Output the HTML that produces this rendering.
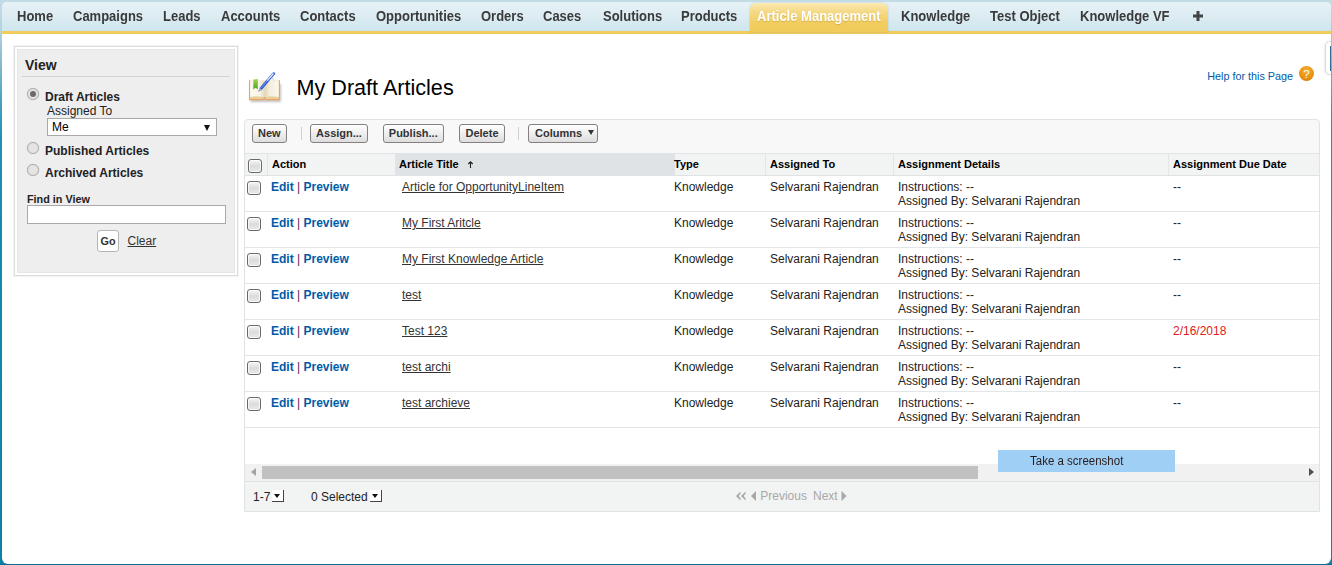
<!DOCTYPE html>
<html>
<head>
<meta charset="utf-8">
<title>Article Management</title>
<style>
*{box-sizing:border-box;margin:0;padding:0}
html,body{width:1332px;height:565px;overflow:hidden}
body{font-family:"Liberation Sans",Arial,sans-serif;font-size:12px;color:#222;position:relative;
 background:linear-gradient(to bottom,#c3dce6 0px,#b4d3df 30px,#8bbdd0 60px,#4aa2bf 100px,#2290b3 140px,#1688ad 250px,#0f7fa5 565px)}
.abs{position:absolute;white-space:nowrap}
#page{position:absolute;left:2px;top:2px;width:1329px;height:562px;background:#fff;border-radius:5px 5px 6px 6px;overflow:hidden}
#rightedge{position:absolute;left:1331px;top:0;width:1px;height:565px;background:linear-gradient(to bottom,#c3dce6 0px,#a9ccd9 30px,#2d8fb0 120px,#147fa3 565px)}
#bottomedge{position:absolute;left:0;top:564px;width:1332px;height:1px;background:#0a6f92}
/* tab bar */
#tabbar{position:absolute;left:0;top:0;width:1329px;height:29px;background:linear-gradient(to bottom,#e6f2f6 0,#dcecf2 50%,#cfe5ee 100%)}
#tabline{position:absolute;left:0;top:29px;width:1329px;height:3px;background:#f1cb5b}
.tab{position:absolute;top:6.7px;font-size:13px;font-weight:bold;color:#3a3a3a;line-height:16px;white-space:nowrap;transform:scaleY(1.07);transform-origin:0 12px}
#acttab{position:absolute;left:748px;top:1px;width:138px;height:29px;border-radius:6px 6px 0 0;background:linear-gradient(to bottom,#faeab4 0,#f5d987 30%,#f1cd60 70%,#f1cb5b 100%);box-shadow:0 0 2px rgba(120,140,150,.45)}
#acttab span{position:absolute;left:7px;top:5.7px;transform:scaleY(1.07);transform-origin:0 12px;font-size:13px;font-weight:bold;color:#fff;line-height:16px;white-space:nowrap;text-shadow:0 1px 1px rgba(190,150,40,.55)}
/* sidebar */
#sb{position:absolute;left:12px;top:44px;width:224px;height:230px;border:1px solid #dcdcdc;background:#fff;box-shadow:0 0 0 1px #f4f4f4}
#sbin{position:absolute;left:2px;top:2px;width:218px;height:224px;background:#eeeeee;border:1px solid #e6e6e6}
.radio{position:absolute;width:12px;height:12px;border-radius:50%;border:1px solid #b0b0b0;background:#e4e4e4;box-shadow:0 0 1px #b8b8b8}
.radio.on:after{content:"";position:absolute;left:2px;top:2px;width:6px;height:6px;border-radius:50%;background:#6a6a6a}
.b{font-weight:bold}
/* main */
a{color:#015ba7;text-decoration:none}
#panel{position:absolute;left:242px;top:117px;width:1076px;height:393px;border:1px solid #e0e3e5;border-radius:4px 4px 0 0;background:#f8f8f8;overflow:hidden}
.btn{position:absolute;top:4px;height:19px;border:1px solid #857f7f;border-radius:3px;background:linear-gradient(to bottom,#ffffff 0,#f0f0f0 45%,#dddddd 100%);font-size:11px;font-weight:bold;color:#333;text-align:center;line-height:17px;white-space:nowrap}
.sep{position:absolute;top:7px;width:1px;height:13px;background:#d0d0d0}
#hdr{position:absolute;left:-1px;top:33px;width:1076px;height:23px;background:#f2f3f3;border-top:1px solid #e0e3e5;border-bottom:1px solid #e0e3e5}
#hdr .h{position:absolute;top:4px;font-size:11px;font-weight:bold;color:#000;line-height:13px;white-space:nowrap}
#hdr .vs{position:absolute;top:0;width:1px;height:21px;background:#e3e5e6}
#sorted{position:absolute;left:151px;top:0;width:280px;height:21px;background:#e0e3e5}
#rows{position:absolute;left:-1px;top:56px;width:1076px;height:288px;background:#fff}
.row{position:absolute;left:0;width:1076px;height:36px;border-bottom:1px solid #e3e6e8}
.row span,.row a{position:absolute;top:4px;line-height:14px;white-space:nowrap}
.cb{position:absolute;width:14px;height:14px;border:1px solid #6a6a6a;border-radius:3px;background:linear-gradient(to bottom,#f6f6f6 0,#dcdcdc 50%,#e9e9e9 100%);box-shadow:inset 0 0 0 1px rgba(255,255,255,.75)}
.act a{font-weight:bold}
.lnk{color:#333;text-decoration:underline}
#sbar{position:absolute;left:0;top:344px;width:1075px;height:17px;background:#f1f1f1}
#thumb{position:absolute;left:17px;top:2px;width:716px;height:13px;background:#c1c1c1}
#foot{position:absolute;left:0;top:361px;width:1075px;height:30px;background:#f2f3f3;border-top:1px solid #e0e3e5}
.dd{position:absolute;width:12px;height:12px;background:#fff;border-right:1px solid #444;border-bottom:1px solid #444}
.dd:after{content:"";position:absolute;left:2px;top:4px;border:3.7px solid transparent;border-top:4.2px solid #111;border-bottom:0}
.g{color:#a8a8a8}
</style>
</head>
<body>
<div id="rightedge"></div>
<div id="bottomedge"></div>
<div id="page">
 <div id="tabbar"></div>
 <div id="tabline"></div>
 <span class="tab" style="left:15px">Home</span>
 <span class="tab" style="left:71px">Campaigns</span>
 <span class="tab" style="left:161px">Leads</span>
 <span class="tab" style="left:219px">Accounts</span>
 <span class="tab" style="left:298px">Contacts</span>
 <span class="tab" style="left:374px">Opportunities</span>
 <span class="tab" style="left:479px">Orders</span>
 <span class="tab" style="left:541px">Cases</span>
 <span class="tab" style="left:601px">Solutions</span>
 <span class="tab" style="left:679px">Products</span>
 <div id="acttab"><span>Article Management</span></div>
 <span class="tab" style="left:899px">Knowledge</span>
 <span class="tab" style="left:988px">Test Object</span>
 <span class="tab" style="left:1078px">Knowledge VF</span>
 <svg class="abs" style="left:1191px;top:9px" width="10" height="10" viewBox="0 0 10 10"><path d="M3.5 0h3v3.5H10v3H6.5V10h-3V6.500H0v-3h3.500z" fill="#444"/></svg>

 <!-- sidebar -->
 <div id="sb"><div id="sbin">
  <span class="abs b" style="left:7px;top:7px;font-size:14px;line-height:17px;color:#222">View</span>
  <div class="abs" style="left:4px;top:26px;width:208px;height:1px;background:#d4d4d4"></div>
  <div class="radio on" style="left:9px;top:38px"></div>
  <span class="abs b" style="left:27px;top:40px;line-height:14px">Draft Articles</span>
  <span class="abs" style="left:29px;top:54px;line-height:14px">Assigned To</span>
  <div class="abs" style="left:29px;top:68px;width:170px;height:18px;background:#fff;border:1px solid #a9a9a9">
    <span class="abs" style="left:4px;top:1px;line-height:14px;color:#000">Me</span>
    <span class="abs" style="left:156px;top:5.5px;width:0;height:0;border:3.5px solid transparent;border-top:6px solid #111;border-bottom:0"></span>
  </div>
  <div class="radio" style="left:9px;top:92px"></div>
  <span class="abs b" style="left:27px;top:94px;line-height:14px">Published Articles</span>
  <div class="radio" style="left:9px;top:114px"></div>
  <span class="abs b" style="left:27px;top:116px;line-height:14px">Archived Articles</span>
  <span class="abs b" style="left:9px;top:143px;font-size:10.8px;line-height:13px">Find in View</span>
  <div class="abs" style="left:9px;top:155px;width:199px;height:19px;background:#fff;border:1px solid #a9a9a9"></div>
  <div class="abs b" style="left:79px;top:180px;width:22px;height:22px;border:1px solid #b5b5b5;border-radius:3px;background:#fff;font-size:10.8px;line-height:20px;text-align:center;color:#333">Go</div>
  <span class="abs" style="left:109.5px;top:184px;line-height:14px;color:#333;text-decoration:underline">Clear</span>
 </div></div>

 <!-- title -->
 <svg class="abs" style="left:244px;top:66px" width="40" height="38" viewBox="0 0 40 38">
  <defs>
   <linearGradient id="pgL" x1="0" x2="1"><stop offset="0" stop-color="#fcfaf2"/><stop offset=".65" stop-color="#f8f4e6"/><stop offset="1" stop-color="#e4d9bc"/></linearGradient>
   <linearGradient id="pgR" x1="0" x2="1"><stop offset="0" stop-color="#dfd2b2"/><stop offset=".35" stop-color="#f3eddb"/><stop offset="1" stop-color="#fbf8ee"/></linearGradient>
   <linearGradient id="grn" x1="0" x2="0" y1="0" y2="1"><stop offset="0" stop-color="#a5d64e"/><stop offset="1" stop-color="#47a41f"/></linearGradient>
   <filter id="bs" x="-20%" y="-20%" width="140%" height="150%"><feGaussianBlur stdDeviation="1.1"/></filter>
  </defs>
  <rect x="4.500" y="16" width="30.500" height="18" fill="#7a7a7a" opacity=".45" filter="url(#bs)"/>
  <path d="M3.600 12.300V31.500H16.300L18.400 29.600L20.500 31.500H33.300V12.300" fill="#f7ead0" stroke="#f0a264" stroke-width="1.300"/>
  <path d="M4.300 31 L15.900 31 L18.400 28.800 L20.900 31 L32.600 31 L32.600 28.600 L4.300 28.600z" fill="#e3d09a"/>
  <path d="M4.300 13 Q11 11.300 18.400 13.500 V28.900 Q11 26.900 4.300 29z" fill="url(#pgL)"/>
  <path d="M32.600 13 Q26 11.300 18.400 13.500 V28.900 Q26 26.900 32.600 29z" fill="url(#pgR)"/>
  <path d="M7.300 11.500 L11.800 10.900 V21.300 L9.500 19.700 L7.300 21.600z" fill="url(#grn)"/>
  <path d="M12.500 23.500 L13.420 20.090 L26.470 4.650 Q28 3.700 29.100 4.900 Q29.900 5.900 28.770 6.590 L15.710 22.030z" fill="#3560d8"/>
  <path d="M14.600 20.300 L21.500 12.200" stroke="#9db4f0" stroke-width=".6" fill="none"/>
  <path d="M21.300 12.700 L27.400 5.500" stroke="#e9effd" stroke-width="1.300" fill="none"/>
  <path d="M12.500 23.500 L13.420 20.090 L15.710 22.030z" fill="#c4c4c4"/>
  <path d="M12.500 23.500 L13 21.800 L14.100 22.700z" fill="#777"/>
  <path d="M25.800 9.700 L28 12.500" stroke="#b9c3dc" stroke-width="1"/>
 </svg>
 <span class="abs" style="left:294.5px;top:73px;font-size:21.6px;line-height:25px;color:#000">My Draft Articles</span>
 <a class="abs" style="left:1205.25px;top:68px;font-size:10.8px;line-height:13px">Help for this Page</a>
 <svg class="abs" style="left:1296px;top:63px" width="17" height="17" viewBox="0 0 17 17">
  <defs><radialGradient id="hg" cx=".5" cy=".3" r=".8"><stop offset="0" stop-color="#f6ae2d"/><stop offset=".7" stop-color="#e68f12"/><stop offset="1" stop-color="#c9760a"/></radialGradient></defs>
  <circle cx="8.500" cy="8.500" r="7.500" fill="url(#hg)"/>
  <text x="8.500" y="12.600" font-family="Liberation Sans,sans-serif" font-size="11.500" fill="#fff" text-anchor="middle">?</text>
 </svg>
 <!-- right widget -->
 <div class="abs" style="left:1323px;top:39px;width:12px;height:34px;border:1px solid #d9dcdf;border-radius:5px;background:#fff;box-shadow:-1px 0 2px rgba(0,0,0,.08)"></div>
 <div class="abs" style="left:1328px;top:44px;width:3px;height:25px;background:#2d6f94"></div>

 <!-- list panel -->
 <div id="panel">
  <div class="btn" style="left:6.5px;width:35.5px">New</div>
  <div class="sep" style="left:55.5px"></div>
  <div class="btn" style="left:65px;width:58px">Assign...</div>
  <div class="btn" style="left:137.5px;width:61.5px">Publish...</div>
  <div class="btn" style="left:213.75px;width:46.5px">Delete</div>
  <div class="sep" style="left:273px"></div>
  <div class="btn" style="left:283px;width:70px;text-align:left;padding-left:6px">Columns<span class="abs" style="left:58.5px;top:5px;width:0;height:0;border:3.5px solid transparent;border-top:5.5px solid #333;border-bottom:0"></span></div>

  <div id="hdr">
   <div id="sorted"></div>
   <div class="vs" style="left:23px"></div>
   <div class="vs" style="left:521px"></div>
   <div class="vs" style="left:649px"></div>
   <div class="vs" style="left:924px"></div>
   <div class="cb" style="left:4px;top:5px"></div>
   <span class="h" style="left:28px">Action</span>
   <span class="h" style="left:155px">Article Title</span>
   <svg class="abs" style="left:223px;top:7px" width="7" height="8" viewBox="0 0 7 8"><path d="M3.500 0.700 L1.300 3 M3.500 0.700 L5.700 3 M3.500 0.700 V7" stroke="#222" stroke-width="1.100" fill="none"/></svg>
   <span class="h" style="left:430px">Type</span>
   <span class="h" style="left:526px">Assigned To</span>
   <span class="h" style="left:654px">Assignment Details</span>
   <span class="h" style="left:929px">Assignment Due Date</span>
  </div>

  <div id="rows">
   <div class="row" style="top:0"><div class="cb" style="left:3px;top:5px"></div><span class="act" style="left:27px"><a style="position:static">Edit</a><i style="font-style:normal;color:#5a1a5a"> | </i><a style="position:static">Preview</a></span><a class="lnk" style="left:158px">Article for OpportunityLineItem</a><span style="left:430px">Knowledge</span><span style="left:526px">Selvarani Rajendran</span><span style="left:654px">Instructions: --<br>Assigned By: Selvarani Rajendran</span><span style="left:929px">--</span></div>
   <div class="row" style="top:36px"><div class="cb" style="left:3px;top:5px"></div><span class="act" style="left:27px"><a style="position:static">Edit</a><i style="font-style:normal;color:#5a1a5a"> | </i><a style="position:static">Preview</a></span><a class="lnk" style="left:158px">My First Aritcle</a><span style="left:430px">Knowledge</span><span style="left:526px">Selvarani Rajendran</span><span style="left:654px">Instructions: --<br>Assigned By: Selvarani Rajendran</span><span style="left:929px">--</span></div>
   <div class="row" style="top:72px"><div class="cb" style="left:3px;top:5px"></div><span class="act" style="left:27px"><a style="position:static">Edit</a><i style="font-style:normal;color:#5a1a5a"> | </i><a style="position:static">Preview</a></span><a class="lnk" style="left:158px">My First Knowledge Article</a><span style="left:430px">Knowledge</span><span style="left:526px">Selvarani Rajendran</span><span style="left:654px">Instructions: --<br>Assigned By: Selvarani Rajendran</span><span style="left:929px">--</span></div>
   <div class="row" style="top:108px"><div class="cb" style="left:3px;top:5px"></div><span class="act" style="left:27px"><a style="position:static">Edit</a><i style="font-style:normal;color:#5a1a5a"> | </i><a style="position:static">Preview</a></span><a class="lnk" style="left:158px">test</a><span style="left:430px">Knowledge</span><span style="left:526px">Selvarani Rajendran</span><span style="left:654px">Instructions: --<br>Assigned By: Selvarani Rajendran</span><span style="left:929px">--</span></div>
   <div class="row" style="top:144px"><div class="cb" style="left:3px;top:5px"></div><span class="act" style="left:27px"><a style="position:static">Edit</a><i style="font-style:normal;color:#5a1a5a"> | </i><a style="position:static">Preview</a></span><a class="lnk" style="left:158px">Test 123</a><span style="left:430px">Knowledge</span><span style="left:526px">Selvarani Rajendran</span><span style="left:654px">Instructions: --<br>Assigned By: Selvarani Rajendran</span><span style="left:929px;color:#e02020">2/16/2018</span></div>
   <div class="row" style="top:180px"><div class="cb" style="left:3px;top:5px"></div><span class="act" style="left:27px"><a style="position:static">Edit</a><i style="font-style:normal;color:#5a1a5a"> | </i><a style="position:static">Preview</a></span><a class="lnk" style="left:158px">test archi</a><span style="left:430px">Knowledge</span><span style="left:526px">Selvarani Rajendran</span><span style="left:654px">Instructions: --<br>Assigned By: Selvarani Rajendran</span><span style="left:929px">--</span></div>
   <div class="row" style="top:216px"><div class="cb" style="left:3px;top:5px"></div><span class="act" style="left:27px"><a style="position:static">Edit</a><i style="font-style:normal;color:#5a1a5a"> | </i><a style="position:static">Preview</a></span><a class="lnk" style="left:158px">test archieve</a><span style="left:430px">Knowledge</span><span style="left:526px">Selvarani Rajendran</span><span style="left:654px">Instructions: --<br>Assigned By: Selvarani Rajendran</span><span style="left:929px">--</span></div>
  </div>

  <div id="sbar">
   <div class="abs" style="left:6px;top:4px;width:0;height:0;border:4.500px solid transparent;border-right:5px solid #a3a3a3;border-left:0"></div>
   <div id="thumb"></div>
   <div class="abs" style="left:1064px;top:4px;width:0;height:0;border:4.500px solid transparent;border-left:5px solid #505050;border-right:0"></div>
  </div>
  <div id="foot">
   <span class="abs" style="left:8px;top:8px;line-height:14px;color:#222">1-7</span>
   <div class="dd" style="left:27px;top:8px"></div>
   <span class="abs" style="left:66px;top:8px;line-height:14px;color:#222">0 Selected</span>
   <div class="dd" style="left:125px;top:8px"></div>
   <svg class="abs" style="left:490px;top:8px" width="24" height="12" viewBox="0 0 24 12"><path d="M5.500 1.500 L1 6 L5.500 10.500 L5.500 8.300 L3.600 6 L5.500 3.700z M10.500 1.500 L6 6 L10.500 10.500 L10.500 8.300 L8.600 6 L10.500 3.700z M21 1 L16 6 L21 11z" fill="#a8a8a8"/></svg>
   <span class="abs g" style="left:515.25px;top:7px;line-height:14px">Previous</span>
   <span class="abs g" style="left:568px;top:7px;line-height:14px">Next</span>
   <svg class="abs" style="left:594.5px;top:8px" width="8" height="12" viewBox="0 0 8 12"><path d="M1.500 1 L6.500 6 L1.500 11z" fill="#a8a8a8"/></svg>
  </div>
 </div>

 <!-- screenshot overlay -->
 <div class="abs" style="left:996px;top:448px;width:177px;height:22px;background:#a0cff6"><span class="abs" style="left:32px;top:4px;font-size:11.500px;line-height:14px;color:#2a1c1c;transform:scaleY(1.08);transform-origin:0 11px">Take a screenshot</span></div>
</div>
</body>
</html>
